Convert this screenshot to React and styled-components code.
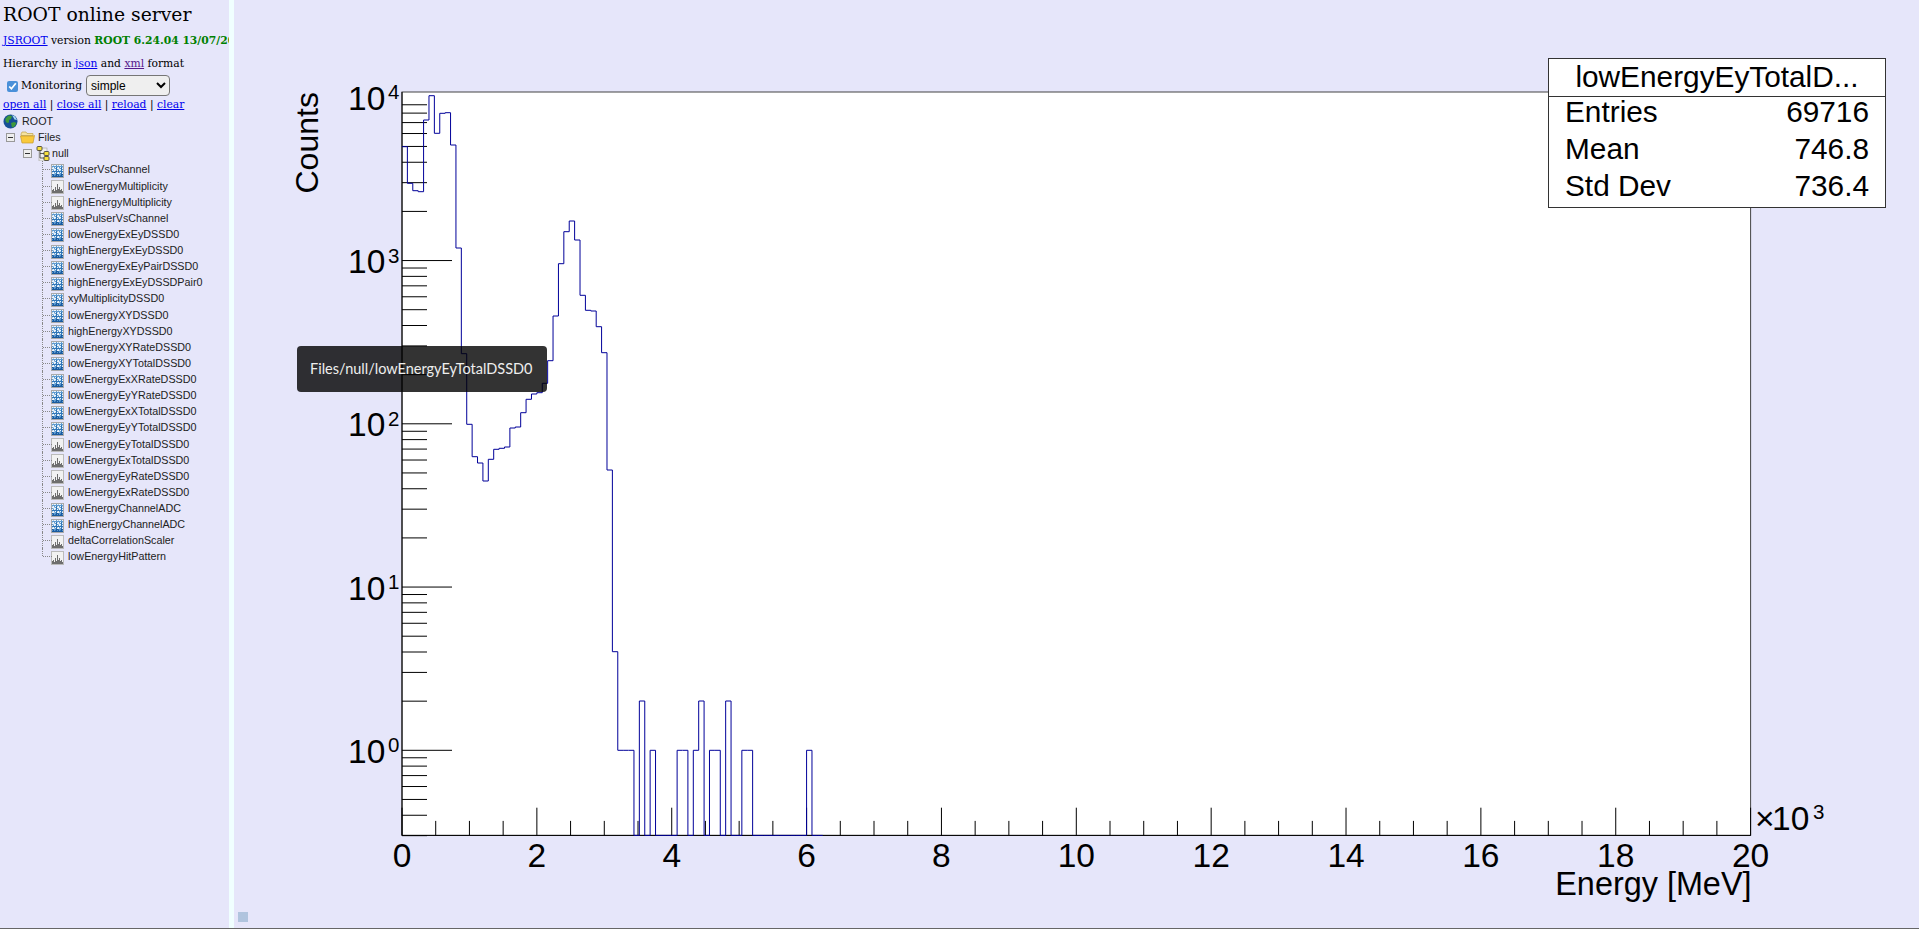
import React from "react";
import styled, { createGlobalStyle } from "styled-components";

const GlobalStyle = createGlobalStyle`
  html, body { margin: 0; padding: 0; height: 100%; overflow: hidden; background: #e6e6fa; }
  #root { height: 100%; }
`;

const Page = styled.div`
  display: flex;
  height: 928px;
  border-bottom: 1px solid #666;
  background: #e6e6fa;
  font-family: "DejaVu Serif", serif;
  color: #000;
`;

const Sidebar = styled.aside`
  width: 229px;
  flex: none;
  padding: 0 0 0 3px;
  box-sizing: border-box;
  overflow: hidden;
  white-space: nowrap;
`;

const Separator = styled.div`
  width: 5px;
  flex: none;
  background: #f0ffff;
`;

const Main = styled.main`
  position: relative;
  flex: 1;
  min-width: 0;
`;

const Title = styled.h1`
  margin: 4px 0 0;
  font-size: 18.8px;
  line-height: 22px;
  font-weight: 400;
`;

const InfoLine = styled.p`
  margin: ${(p) => p.$top}px 0 0;
  font-size: 10.75px;
  line-height: 14px;
`;

const Version = styled.strong`
  color: #008000;
`;

const Link = styled.a`
  color: ${(p) => (p.$visited ? "#551a8b" : "#0000ee")};
  text-decoration: underline;
`;

const MonitorRow = styled.label`
  display: flex;
  align-items: center;
  height: 21px;
  margin-top: 4px;
  font-size: 10.75px;
`;

const Check = styled.input`
  width: 11px;
  height: 11px;
  margin: 2px 3px 0 4px;
  accent-color: #4a90d9;
`;

const Mode = styled.select`
  width: 84px;
  height: 21px;
  margin-left: 4px;
  font: 12px "Liberation Sans", sans-serif;
  padding: 0;
  border-radius: 4px;
  border: 1px solid #767676;
  background-color: #efefef;
`;

const TreeBox = styled.div`
  margin: 1px 0 0 -3px;
  font: 10.75px/16.125px "Liberation Sans", sans-serif;
  color: #222;
`;

const Row = styled.div`
  display: flex;
  align-items: center;
  height: 16.125px;
  padding-left: ${(p) => p.$indent}px;
`;

const Branch = styled.span`
  position: relative;
  align-self: flex-start;
  flex: none;
  width: 9px;
  height: ${(p) => (p.$last ? "50%" : "100%")};
  margin-left: 42px;
  border-left: 1px dotted #888;
  box-sizing: border-box;
  &::after {
    content: "";
    position: absolute;
    left: 0;
    top: 8px;
    width: 9px;
    border-top: 1px dotted #888;
  }
`;

const IconSvg = styled.svg`
  flex: none;
  display: block;
`;

const LeafIcon = styled(IconSvg)`
  margin-top: 3px;
`;

const Label = styled.span`
  margin-left: ${(p) => p.$gap ?? 4}px;
`;

const Stats = styled.div`
  position: absolute;
  left: 1314px;
  top: 58px;
  width: 338px;
  height: 150px;
  box-sizing: border-box;
  background: #fff;
  border: 1px solid #333;
  font: 29.8px "Liberation Sans", sans-serif;
  color: #000;
`;

const StatsTitle = styled.div`
  height: 37px;
  line-height: 35px;
  text-align: center;
  border-bottom: 1px solid #333;
`;

const StatsRow = styled.div`
  display: flex;
  justify-content: space-between;
  height: 37px;
  line-height: 30px;
  padding: 0 16px;
`;

const Tooltip = styled.div`
  position: absolute;
  left: 63px;
  top: 346px;
  width: 250px;
  height: 46px;
  box-sizing: border-box;
  padding-left: 13px;
  border-radius: 4px;
  background: rgba(0, 0, 0, 0.8);
  color: #eee;
  font: 14.5px/45px Lato, sans-serif;
`;

const Handle = styled.div`
  position: absolute;
  left: 4px;
  bottom: 6px;
  width: 10px;
  height: 10px;
  background: #b0c4de;
`;

const ChartSvg = styled.svg`
  display: block;
  font-family: "Liberation Sans", sans-serif;
  fill: #000;
`;

const Globe = () => (
  <IconSvg width="15" height="15" viewBox="0 0 15 15">
    <circle cx="7.5" cy="7.5" r="7" fill="#164f96" />
    <path d="M2.500 4.500l3-3 3.500.5-1 3-2 1v2.500l-2 .5-1.500-2zM8 9l3-1 2.500 1-2 3.500-2.500 1z" fill="#3f9a3a" />
    <path d="M9 1l3 1.500 2 3.500-2.500-.5z" fill="#a8d8f4" />
  </IconSvg>
);

const Minus = () => (
  <IconSvg width="9" height="9" viewBox="0 0 9 9">
    <rect x="0.5" y="0.5" width="8" height="8" fill="#eee" stroke="#999" />
    <path d="M2 4.500h5" stroke="#333" />
  </IconSvg>
);

const Folder = () => (
  <IconSvg width="15" height="14" viewBox="0 0 15 14">
    <path d="M1 4l1-2h4l1 1.500h6v2H1z" fill="#f5e3a0" stroke="#bfa24a" strokeWidth=".7" />
    <path d="M.5 6h12.500l1.500-.5-1.500 7.500H2z" fill="#f9c93c" stroke="#c49a2c" strokeWidth=".7" />
  </IconSvg>
);

const NullIcon = () => (
  <IconSvg width="14" height="15" viewBox="0 0 14 15">
    <rect x="3" y="2" width="8" height="13" fill="#eee" stroke="#aaa" strokeWidth=".7" />
    <path d="M4 3v9h5M4 7.500h5" stroke="#333" fill="none" strokeWidth=".8" />
    <rect x="1" y="0.500" width="5" height="4" rx="1" fill="#f7e03c" stroke="#333" strokeWidth=".8" />
    <rect x="8" y="5.500" width="5" height="4" rx="1" fill="#f7e03c" stroke="#333" strokeWidth=".8" />
    <rect x="8" y="10.500" width="5" height="4" rx="1" fill="#f7e03c" stroke="#333" strokeWidth=".8" />
  </IconSvg>
);

const noiseColors = ["#eef4fa", "#a4c8e6", "#5f9bd0", "#2f76b8", "#1a5a9e"];

const Hist2Icon = () => {
  const cells = [];
  for (let y = 0; y < 12; y++) {
    for (let x = 0; x < 11; x++) {
      const n = (x * 7 + y * 13 + ((x * y) % 5) * 3) % 5;
      const shift = y > 8 ? 2 : y < 2 ? -1 : 0;
      const c = Math.max(0, Math.min(4, n % 4 + shift));
      cells.push(<rect key={x + "-" + y} x={x + 1} y={y + 1} width="1" height="1" fill={noiseColors[c]} />);
    }
  }
  return (
    <LeafIcon width="13" height="14" viewBox="0 0 13 14">
      <rect x="0.5" y="0.5" width="12" height="13" fill="#fff" stroke="#aaa" />
      {cells}
    </LeafIcon>
  );
};

const Hist1Icon = () => (
  <LeafIcon width="13" height="14" viewBox="0 0 13 14">
    <rect x="0.5" y="0.5" width="12" height="13" fill="#f2f2f2" stroke="#bbb" />
    <path d="M1 13V10h1V9h1V11h1V7h1V10h1V4h1V9h1V7h1V10h1V9h1V11h1v2z" fill="#6e6e6e" />
  </LeafIcon>
);

const leaves = [
  ["pulserVsChannel", 2],
  ["lowEnergyMultiplicity", 1],
  ["highEnergyMultiplicity", 1],
  ["absPulserVsChannel", 2],
  ["lowEnergyExEyDSSD0", 2],
  ["highEnergyExEyDSSD0", 2],
  ["lowEnergyExEyPairDSSD0", 2],
  ["highEnergyExEyDSSDPair0", 2],
  ["xyMultiplicityDSSD0", 2],
  ["lowEnergyXYDSSD0", 2],
  ["highEnergyXYDSSD0", 2],
  ["lowEnergyXYRateDSSD0", 2],
  ["lowEnergyXYTotalDSSD0", 2],
  ["lowEnergyExXRateDSSD0", 2],
  ["lowEnergyEyYRateDSSD0", 2],
  ["lowEnergyExXTotalDSSD0", 2],
  ["lowEnergyEyYTotalDSSD0", 2],
  ["lowEnergyEyTotalDSSD0", 1],
  ["lowEnergyExTotalDSSD0", 1],
  ["lowEnergyEyRateDSSD0", 1],
  ["lowEnergyExRateDSSD0", 1],
  ["lowEnergyChannelADC", 2],
  ["highEnergyChannelADC", 2],
  ["deltaCorrelationScaler", 1],
  ["lowEnergyHitPattern", 1],
];

// plot frame, page pixels
const X0 = 402;
const X1 = 1750.6;
const Y0 = 92;
const YB = 835.4;
const BIN = (X1 - X0) / 250;
const DEC = 163.25;
const Y_1 = 750.3; // 10^0
const Y_2 = 701; // two counts

const tall = [
  146.7, 183.3, 190.7, 191.7, 120, 95.7, 133.3, 113.3, 112.7, 145, 248, 353.7, 424.3, 456.7, 463, 481,
  459.3, 449.3, 448.3, 447, 428, 427, 412.7, 399.3, 394, 392.7, 383.3, 360.7, 316, 263.7, 231.7, 221,
  240, 295.3, 310.3, 311, 326.7, 352.7, 470, 651.7, Y_1, Y_1, Y_1,
];
const tail = { 44: Y_2, 46: Y_1, 51: Y_1, 52: Y_1, 54: Y_1, 55: Y_2, 57: Y_1, 58: Y_1, 60: Y_2, 63: Y_1, 64: Y_1, 75: Y_1 };

const histPath = () => {
  let d = `M${X0} ${tall[0]}`;
  for (let i = 0; i < 78; i++) {
    const y = i < tall.length ? tall[i] : tail[i] || YB;
    d += `V${y}H${(X0 + (i + 1) * BIN).toFixed(2)}`;
  }
  return d;
};

const yTicks = () => {
  const out = [];
  for (let e = -1; e < 4; e++) {
    const base = Y_1 - e * DEC;
    if (e >= 0) out.push(<line key={"M" + e} x1={X0} x2={X0 + 50} y1={base} y2={base} />);
    for (let k = 2; k < 10; k++) {
      const y = base - DEC * Math.log10(k);
      if (y > Y0 && y <= YB + 1) out.push(<line key={e + "_" + k} x1={X0} x2={X0 + 25} y1={y} y2={y} />);
    }
  }
  return out;
};

const xTicks = () => {
  const out = [];
  for (let i = 0; i <= 40; i++) {
    const x = X0 + (i * (X1 - X0)) / 40;
    out.push(<line key={i} x1={x} x2={x} y1={YB} y2={YB - (i % 4 === 0 ? 27.7 : 14.5)} />);
  }
  return out;
};

const Chart = () => (
  <ChartSvg width="1685" height="928" viewBox="234 0 1685 928">
    <rect x={X0} y={Y0} width={X1 - X0} height={YB - Y0} fill="#fff" stroke="#444" />
    <g stroke="#000" strokeWidth="1">{yTicks()}</g>
    <g stroke="#000" strokeWidth="1">{xTicks()}</g>
    <line x1={X0} x2={X0} y1={Y0} y2={YB} stroke="#000" />
    <line x1={X0} x2={X1} y1={YB} y2={YB} stroke="#000" />
    <path d={histPath()} fill="none" stroke="#000099" strokeWidth="1" />
    {[0, 2, 4, 6, 8, 10, 12, 14, 16, 18, 20].map((v) => (
      <text key={v} x={X0 + v * 67.43} y="867" fontSize="33.5" textAnchor="middle">
        {v}
      </text>
    ))}
    {[4, 3, 2, 1, 0].map((e) => {
      const y = Y_1 - e * DEC;
      return (
        <g key={e}>
          <text x="348" y={y + 12.5} fontSize="33.5">10</text>
          <text x="388" y={y + 2} fontSize="20.5">{e}</text>
        </g>
      );
    })}
    <text x="1755" y="830" fontSize="33.5">×</text>
    <text x="1772" y="830" fontSize="33.5">10</text>
    <text x="1813" y="819" fontSize="20.5">3</text>
    <text x="1751.5" y="895" fontSize="32.4" textAnchor="end">Energy [MeV]</text>
    <text x="318" y="193.5" fontSize="32" transform="rotate(-90 318 193.5)">Counts</text>
  </ChartSvg>
);

const App = () => (
  <>
    <GlobalStyle />
    <Page>
      <Sidebar>
        <Title>ROOT online server</Title>
        <InfoLine $top={8}>
          <Link href="#">JSROOT</Link> version <Version>ROOT 6.24.04 13/07/2021</Version>
        </InfoLine>
        <InfoLine $top={9}>
          Hierarchy in <Link href="#">json</Link> and <Link href="#" $visited>xml</Link> format
        </InfoLine>
        <MonitorRow>
          <Check type="checkbox" defaultChecked />
          Monitoring
          <Mode defaultValue="simple">
            <option>simple</option>
            <option>simple2</option>
          </Mode>
        </MonitorRow>
        <InfoLine $top={2}>
          <Link href="#">open all</Link> | <Link href="#">close all</Link> | <Link href="#">reload</Link> | <Link href="#">clear</Link>
        </InfoLine>
        <TreeBox>
          <Row $indent={3}>
            <Globe />
            <Label $gap={4}>ROOT</Label>
          </Row>
          <Row $indent={6}>
            <Minus />
            <IconSvg width="5" height="1" />
            <Folder />
            <Label $gap={3}>Files</Label>
          </Row>
          <Row $indent={23}>
            <Minus />
            <IconSvg width="4" height="1" />
            <NullIcon />
            <Label $gap={2}>null</Label>
          </Row>
          {leaves.map(([name, kind], i) => (
            <Row key={name} $indent={0}>
              <Branch $last={i === leaves.length - 1} />
              {kind === 2 ? <Hist2Icon /> : <Hist1Icon />}
              <Label>{name}</Label>
            </Row>
          ))}
        </TreeBox>
      </Sidebar>
      <Separator />
      <Main>
        <Chart />
        <Stats>
          <StatsTitle>lowEnergyEyTotalD...</StatsTitle>
          <StatsRow><span>Entries</span><span>69716</span></StatsRow>
          <StatsRow><span>Mean</span><span>746.8</span></StatsRow>
          <StatsRow><span>Std Dev</span><span>736.4</span></StatsRow>
        </Stats>
        <Tooltip>Files/null/lowEnergyEyTotalDSSD0</Tooltip>
        <Handle />
      </Main>
    </Page>
  </>
);

export default App;
